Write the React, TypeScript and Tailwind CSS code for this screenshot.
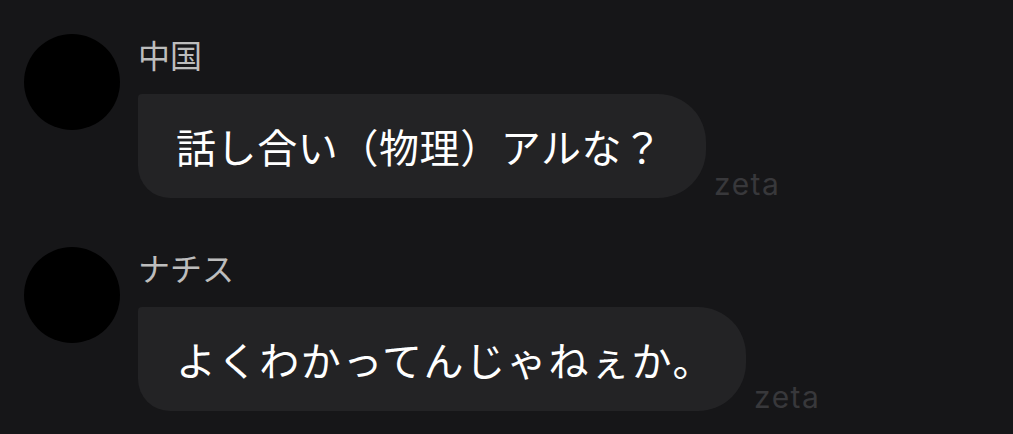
import React from "react";

const jp = { fontFamily: '"Noto Sans CJK JP", "Noto Sans", sans-serif' };
const latin = { fontFamily: 'Inter, "Noto Sans", sans-serif' };

function Message({
  name,
  text,
  width,
  tracking,
}: {
  name: string;
  text: string;
  width: string;
  tracking: string;
}) {
  return (
    <div className="flex gap-[18px]">
      <div className="w-[96px] h-[96px] rounded-full bg-black shrink-0" />
      <div className="flex flex-col">
        <div className="h-[60px] pt-[4px] text-[32px] leading-[32px] text-[#bdbdbd]" style={jp}>
          {name}
        </div>
        <div className="flex items-end">
          <div
            className={`${width} ${tracking} h-[104px] flex items-center pl-[38px] bg-[#232325] rounded-tl-[4px] rounded-bl-[32px] rounded-r-[48px] text-white text-[40px] leading-none whitespace-nowrap`}
            style={jp}
          >
            {text}
          </div>
          <div className="ml-[8px] -mb-[1px] text-[30px] leading-none tracking-[0.05em] text-[#38383b]" style={latin}>
            zeta
          </div>
        </div>
      </div>
    </div>
  );
}

export default function App() {
  return (
    <div className="w-[1013px] h-[434px] bg-[#161618] pl-[24px] pt-[34px] flex flex-col gap-[49px] overflow-hidden">
      <Message name="中国" text="話し合い（物理）アルな？" width="w-[568px]" tracking="tracking-[0.015em]" />
      <Message name="ナチス" text="よくわかってんじゃねぇか。" width="w-[608px]" tracking="tracking-[0.04em]" />
    </div>
  );
}
